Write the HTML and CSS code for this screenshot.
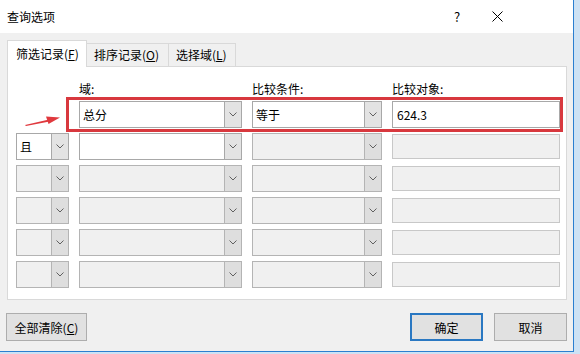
FILE: index.html
```html
<!DOCTYPE html>
<html lang="zh-CN">
<head>
  <meta charset="UTF-8">
  <title>查询选项</title>
  <link rel="stylesheet" href="styles.css">
</head>
<body>
  <div class="window">
    <div class="titlebar">
      <span class="title">查询选项</span>
      <span class="help">?</span>
      <span class="close">
        <svg width="11" height="11" viewBox="0 0 11 11"><path d="M0.5 0.5 L10.5 10.5 M10.5 0.5 L0.5 10.5" stroke="#000" stroke-width="1" fill="none"/></svg>
      </span>
    </div>

    <div class="content">
      <div class="tabs">
        <div class="tab active">筛选记录(<u>F</u>)</div>
        <div class="tab">排序记录(<u>O</u>)</div>
        <div class="tab">选择域(<u>L</u>)</div>
      </div>

      <div class="panel">
        <div class="grid">
          <span></span>
          <span class="label">域:</span>
          <span class="label">比较条件:</span>
          <span class="label">比较对象:</span>

          <span></span>
          <div class="combo"><span class="val">总分</span><span class="btn"><svg width="8" height="5" viewBox="0 0 8 5"><path d="M0.5 0.5 L4 4 L7.5 0.5"/></svg></span></div>
          <div class="combo"><span class="val">等于</span><span class="btn"><svg width="8" height="5" viewBox="0 0 8 5"><path d="M0.5 0.5 L4 4 L7.5 0.5"/></svg></span></div>
          <div class="input"><span class="val">624.3</span></div>

          <div class="combo"><span class="val">且</span><span class="btn"><svg width="8" height="5" viewBox="0 0 8 5"><path d="M0.5 0.5 L4 4 L7.5 0.5"/></svg></span></div>
          <div class="combo"><span class="val"></span><span class="btn"><svg width="8" height="5" viewBox="0 0 8 5"><path d="M0.5 0.5 L4 4 L7.5 0.5"/></svg></span></div>
          <div class="combo disabled"><span class="val"></span><span class="btn"><svg width="8" height="5" viewBox="0 0 8 5"><path d="M0.5 0.5 L4 4 L7.5 0.5"/></svg></span></div>
          <div class="input disabled"></div>

          <div class="combo disabled"><span class="val"></span><span class="btn"><svg width="8" height="5" viewBox="0 0 8 5"><path d="M0.5 0.5 L4 4 L7.5 0.5"/></svg></span></div>
          <div class="combo disabled"><span class="val"></span><span class="btn"><svg width="8" height="5" viewBox="0 0 8 5"><path d="M0.5 0.5 L4 4 L7.5 0.5"/></svg></span></div>
          <div class="combo disabled"><span class="val"></span><span class="btn"><svg width="8" height="5" viewBox="0 0 8 5"><path d="M0.5 0.5 L4 4 L7.5 0.5"/></svg></span></div>
          <div class="input disabled"></div>

          <div class="combo disabled"><span class="val"></span><span class="btn"><svg width="8" height="5" viewBox="0 0 8 5"><path d="M0.5 0.5 L4 4 L7.5 0.5"/></svg></span></div>
          <div class="combo disabled"><span class="val"></span><span class="btn"><svg width="8" height="5" viewBox="0 0 8 5"><path d="M0.5 0.5 L4 4 L7.5 0.5"/></svg></span></div>
          <div class="combo disabled"><span class="val"></span><span class="btn"><svg width="8" height="5" viewBox="0 0 8 5"><path d="M0.5 0.5 L4 4 L7.5 0.5"/></svg></span></div>
          <div class="input disabled"></div>

          <div class="combo disabled"><span class="val"></span><span class="btn"><svg width="8" height="5" viewBox="0 0 8 5"><path d="M0.5 0.5 L4 4 L7.5 0.5"/></svg></span></div>
          <div class="combo disabled"><span class="val"></span><span class="btn"><svg width="8" height="5" viewBox="0 0 8 5"><path d="M0.5 0.5 L4 4 L7.5 0.5"/></svg></span></div>
          <div class="combo disabled"><span class="val"></span><span class="btn"><svg width="8" height="5" viewBox="0 0 8 5"><path d="M0.5 0.5 L4 4 L7.5 0.5"/></svg></span></div>
          <div class="input disabled"></div>

          <div class="combo disabled"><span class="val"></span><span class="btn"><svg width="8" height="5" viewBox="0 0 8 5"><path d="M0.5 0.5 L4 4 L7.5 0.5"/></svg></span></div>
          <div class="combo disabled"><span class="val"></span><span class="btn"><svg width="8" height="5" viewBox="0 0 8 5"><path d="M0.5 0.5 L4 4 L7.5 0.5"/></svg></span></div>
          <div class="combo disabled"><span class="val"></span><span class="btn"><svg width="8" height="5" viewBox="0 0 8 5"><path d="M0.5 0.5 L4 4 L7.5 0.5"/></svg></span></div>
          <div class="input disabled"></div>
        </div>
      </div>

      <div class="footer">
        <button class="button wide">全部清除(<u>C</u>)</button>
        <span class="spacer"></span>
        <button class="button default">确定</button>
        <button class="button">取消</button>
      </div>
    </div>

    <!-- annotation drawn over the dialog -->
    <div class="highlight"></div>
    <svg class="arrow" width="40" height="16" viewBox="0 0 40 16">
      <polygon points="0,11 24,5.5 24.5,7.5 1,12" fill="#e0393e"/>
      <polygon points="21,2.5 35,3.5 23.5,10" fill="#e0393e"/>
    </svg>
  </div>
</body>
</html>
```

FILE: styles.css
```css
body {
  margin: 0;
  background: #cde2f4;
  font-family: "Noto Sans CJK SC", "Microsoft YaHei", sans-serif;
  font-size: 12px;
  color: #000;
}

.window {
  position: relative;
  width: 573px;
  height: 351px;
  background: #f0f0f0;
  border-right: 1px solid #2b7fd0;
  border-bottom: 1px solid #2b7fd0;
  overflow: hidden;
}

.titlebar {
  display: flex;
  align-items: center;
  height: 33px;
  background: #fff;
  padding-left: 7px;
}

.title {
  flex: 1;
}

.help {
  width: 20px;
  text-align: center;
  font-size: 13px;
  margin-right: 20px;
}

.close {
  display: flex;
  width: 20px;
  justify-content: center;
  margin-right: 66px;
}

.content {
  padding: 7px 6px 0 7px;
}

.tabs {
  display: flex;
  height: 26px;
  align-items: flex-end;
}

.tab {
  height: 23px;
  line-height: 22px;
  padding: 0 7px 0 7px;
  border: 1px solid #d9d9d9;
  border-bottom: none;
  border-left: none;
  background: #f0f0f0;
  box-sizing: border-box;
}

.tab.active {
  height: 27px;
  line-height: 26px;
  width: 80px;
  padding-left: 8px;
  background: #fff;
  border-left: 1px solid #d9d9d9;
  margin-bottom: -1px;
  position: relative;
  z-index: 1;
}

.tab:nth-child(2) {
  width: 82px;
}

.tab:nth-child(3) {
  width: 67px;
}

.tab u,
.button u {
  text-decoration: underline;
  text-underline-offset: 1px;
}

.panel {
  width: 560px;
  height: 234px;
  box-sizing: border-box;
  background: #fff;
  border: 1px solid #d9d9d9;
  padding: 15px 0 0 8px;
}

.grid {
  display: grid;
  grid-template-columns: 53px 163px 130px 168px;
  grid-template-rows: 14px repeat(6, 27px);
  column-gap: 10px;
  row-gap: 5px;
}

.label {
  line-height: 14px;
  color: #000;
}

.combo {
  display: flex;
  box-sizing: border-box;
  border: 1px solid #a8a8a8;
  background: #fff;
}

.combo .val {
  flex: 1;
  padding-left: 3px;
  line-height: 25px;
}

.combo .btn {
  display: flex;
  align-items: center;
  justify-content: center;
  width: 16px;
  background: #e3e3e3;
  border-left: 1px solid #a8a8a8;
}

.combo .btn path {
  stroke: #606060;
  fill: none;
}

.combo.disabled {
  background: #f0f0f0;
  border-color: #b4b4b4;
}

.combo.disabled .btn {
  background: #dedede;
  border-left-color: #b4b4b4;
}

.input {
  box-sizing: border-box;
  border: 1px solid #a8a8a8;
  background: #fff;
}

.input .val {
  display: block;
  padding-left: 4px;
  line-height: 25px;
}

.input.disabled {
  background: #f0f0f0;
  border-color: #c8c8c8;
  margin: 1px 0;
}

.footer {
  display: flex;
  margin-top: 13px;
}

.spacer {
  flex: 1;
}

.button {
  height: 28px;
  width: 73px;
  font-family: inherit;
  font-size: 12px;
  background: #e1e1e1;
  border: 1px solid #adadad;
  padding: 0;
  margin-left: 11px;
  color: #000;
}

.button.wide {
  width: 81px;
  margin-left: -1px;
}

.button.default {
  border: 2px solid #2a78c2;
}

.highlight {
  position: absolute;
  left: 66px;
  top: 97px;
  width: 491px;
  height: 29px;
  border: 3px solid #d8383e;
}

.arrow {
  position: absolute;
  left: 25px;
  top: 114px;
}
```
